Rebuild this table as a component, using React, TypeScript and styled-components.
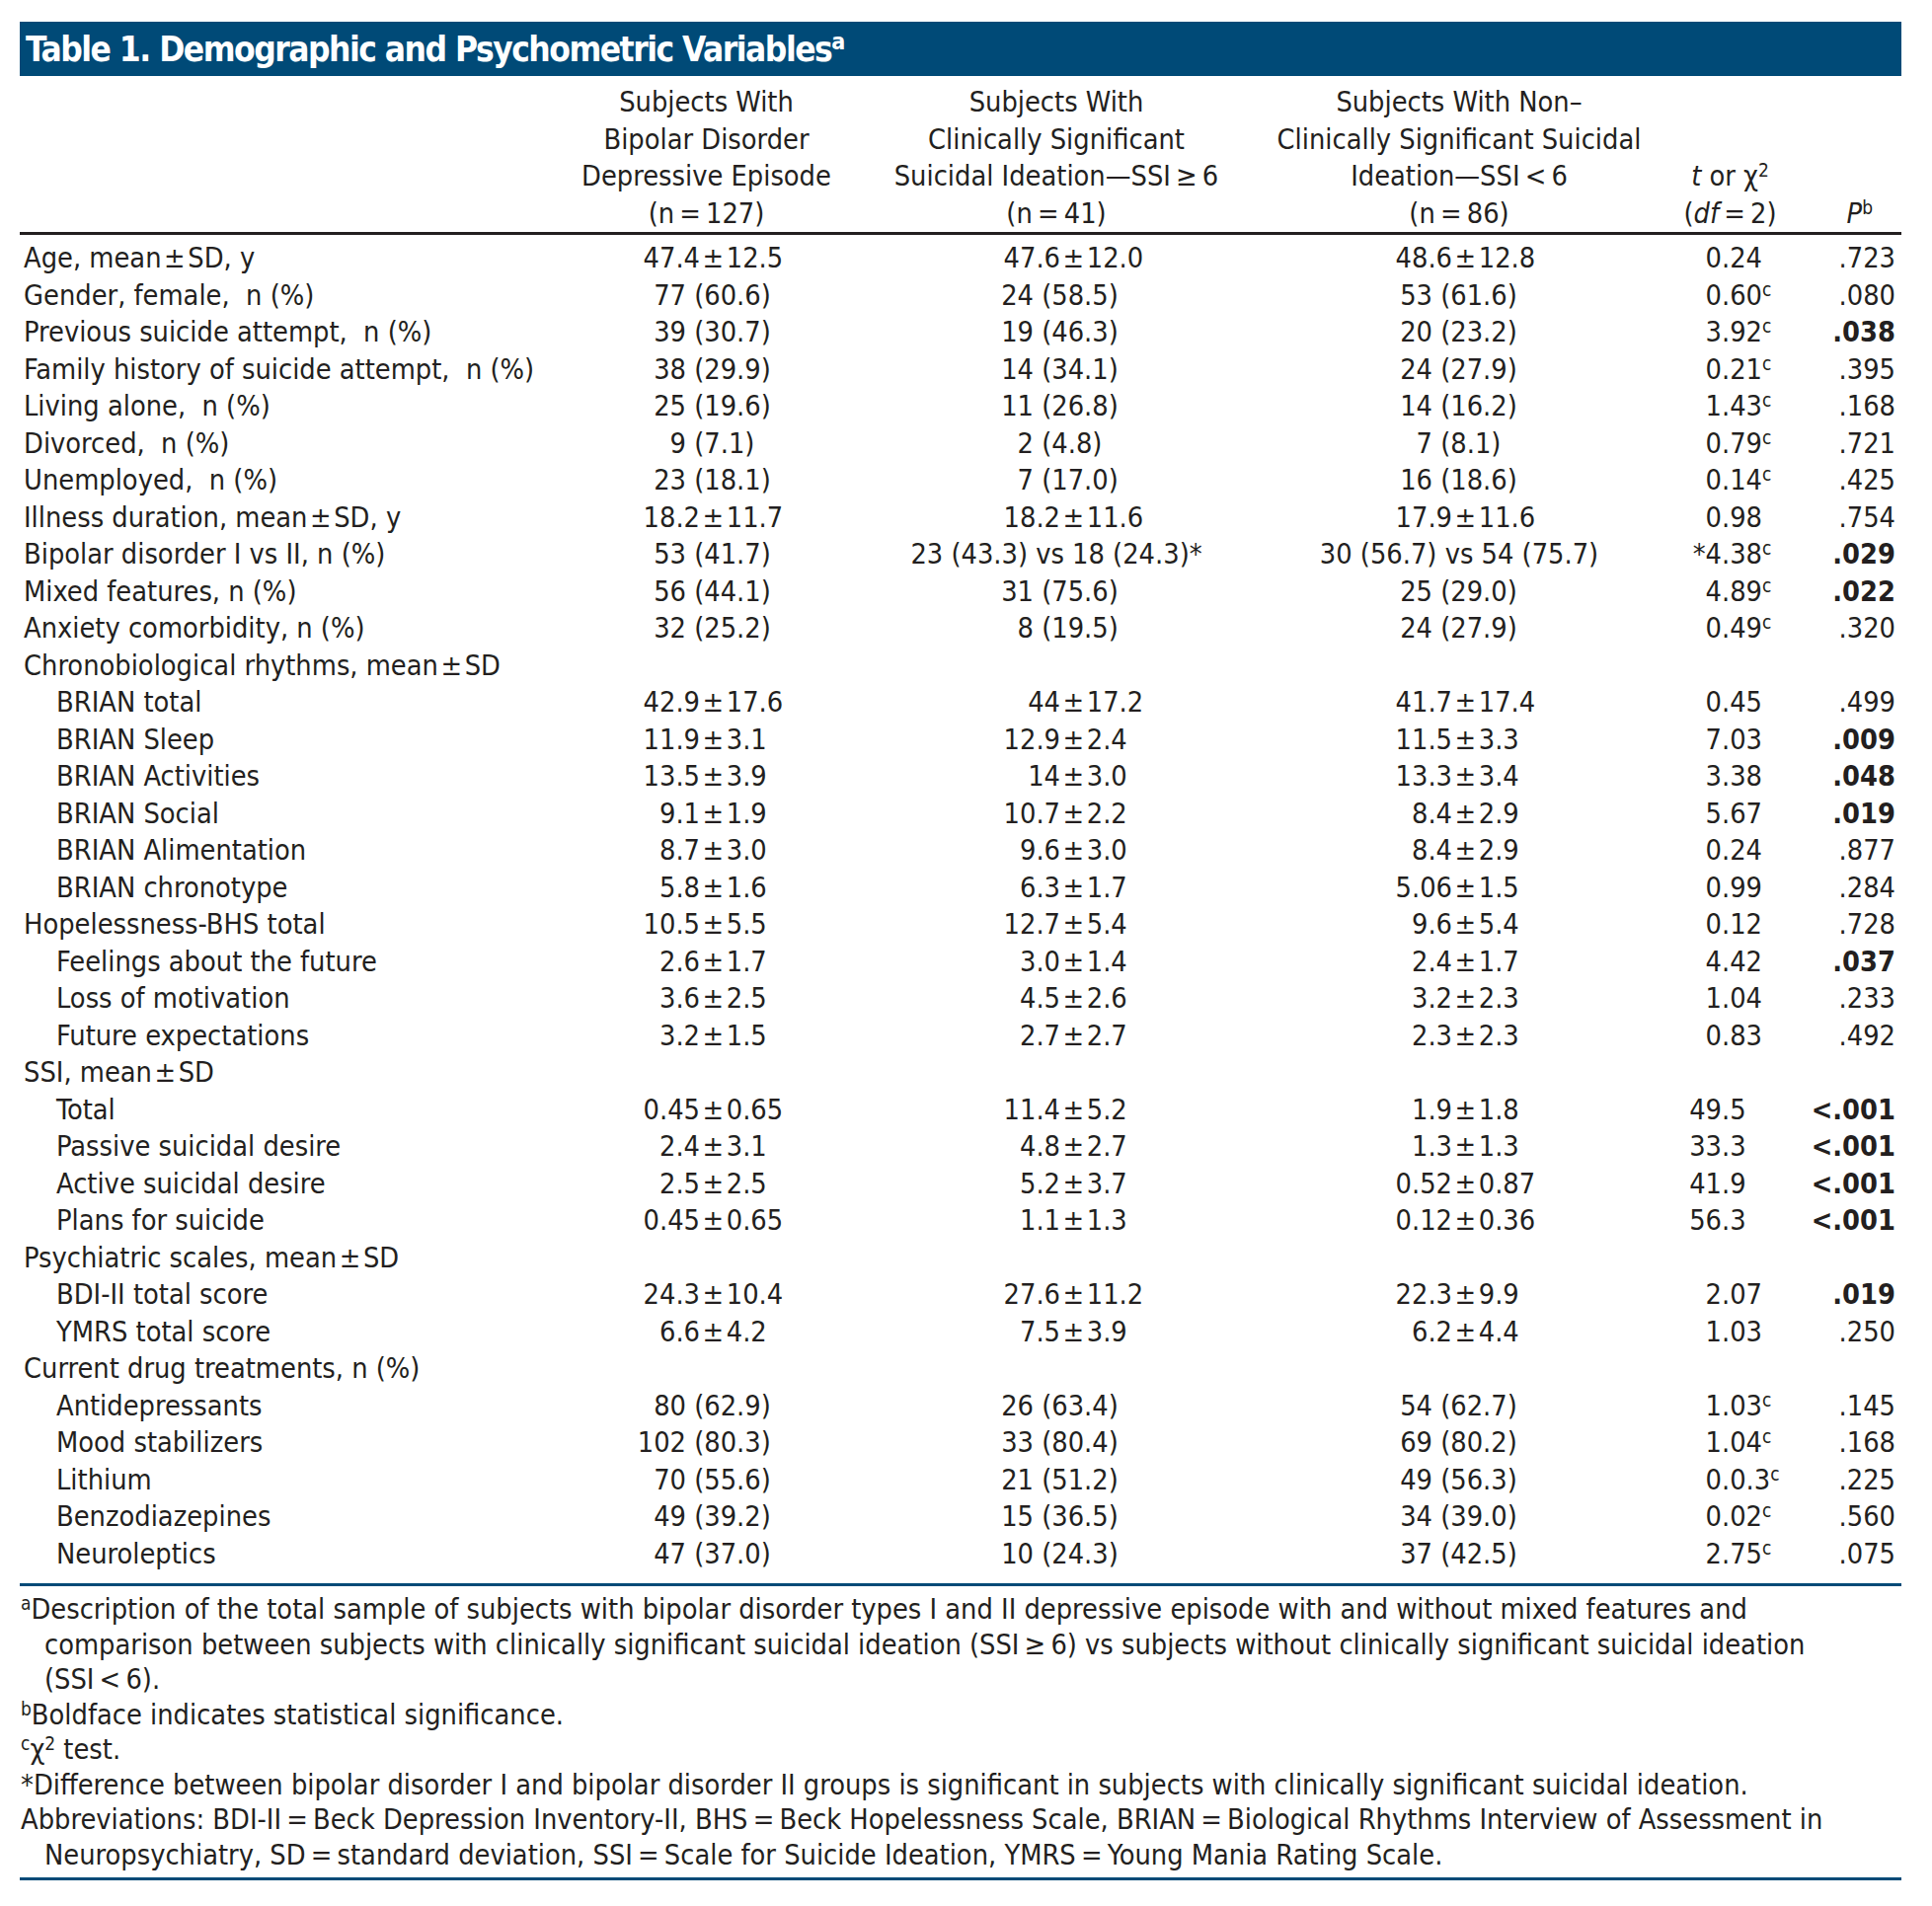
import React from 'react';
import styled, { createGlobalStyle } from 'styled-components';

const ink = '#231f20';
const navy = '#004a77';
const COLS = '527px 337px 372px 444px 105px 121px';
const PM = '\u200a±\u200a';
const EQ = '\u2009=\u2009';

type Row = {
    label: string;
    indent?: boolean;
    v?: [string, string, string];
    t?: string;
    p?: string;
    bold?: boolean;
};

const rows: Row[] = [
    { label: `Age, mean${PM}SD, y`, v: ['47.4±12.5', '47.6±12.0', '48.6±12.8'], t: '0.24', p: '.723' },
    { label: 'Gender, female,\u00a0 n (%)', v: ['77 (60.6)', '24 (58.5)', '53 (61.6)'], t: '0.60^c', p: '.080' },
    { label: 'Previous suicide attempt,\u00a0 n (%)', v: ['39 (30.7)', '19 (46.3)', '20 (23.2)'], t: '3.92^c', p: '.038', bold: true },
    { label: 'Family history of suicide attempt,\u00a0 n (%)', v: ['38 (29.9)', '14 (34.1)', '24 (27.9)'], t: '0.21^c', p: '.395' },
    { label: 'Living alone,\u00a0 n (%)', v: ['25 (19.6)', '11 (26.8)', '14 (16.2)'], t: '1.43^c', p: '.168' },
    { label: 'Divorced,\u00a0 n (%)', v: ['9 (7.1)', '2 (4.8)', '7 (8.1)'], t: '0.79^c', p: '.721' },
    { label: 'Unemployed,\u00a0 n (%)', v: ['23 (18.1)', '7 (17.0)', '16 (18.6)'], t: '0.14^c', p: '.425' },
    { label: `Illness duration, mean${PM}SD, y`, v: ['18.2±11.7', '18.2±11.6', '17.9±11.6'], t: '0.98', p: '.754' },
    { label: 'Bipolar disorder I vs II, n (%)', v: ['53 (41.7)', '23 (43.3) vs 18 (24.3)*', '30 (56.7) vs 54 (75.7)'], t: '*4.38^c', p: '.029', bold: true },
    { label: 'Mixed features, n (%)', v: ['56 (44.1)', '31 (75.6)', '25 (29.0)'], t: '4.89^c', p: '.022', bold: true },
    { label: 'Anxiety comorbidity, n (%)', v: ['32 (25.2)', '8 (19.5)', '24 (27.9)'], t: '0.49^c', p: '.320' },
    { label: `Chronobiological rhythms, mean${PM}SD` },
    { label: 'BRIAN total', indent: true, v: ['42.9±17.6', '44±17.2', '41.7±17.4'], t: '0.45', p: '.499' },
    { label: 'BRIAN Sleep', indent: true, v: ['11.9±3.1', '12.9±2.4', '11.5±3.3'], t: '7.03', p: '.009', bold: true },
    { label: 'BRIAN Activities', indent: true, v: ['13.5±3.9', '14±3.0', '13.3±3.4'], t: '3.38', p: '.048', bold: true },
    { label: 'BRIAN Social', indent: true, v: ['9.1±1.9', '10.7±2.2', '8.4±2.9'], t: '5.67', p: '.019', bold: true },
    { label: 'BRIAN Alimentation', indent: true, v: ['8.7±3.0', '9.6±3.0', '8.4±2.9'], t: '0.24', p: '.877' },
    { label: 'BRIAN chronotype', indent: true, v: ['5.8±1.6', '6.3±1.7', '5.06±1.5'], t: '0.99', p: '.284' },
    { label: 'Hopelessness-BHS total', v: ['10.5±5.5', '12.7±5.4', '9.6±5.4'], t: '0.12', p: '.728' },
    { label: 'Feelings about the future', indent: true, v: ['2.6±1.7', '3.0±1.4', '2.4±1.7'], t: '4.42', p: '.037', bold: true },
    { label: 'Loss of motivation', indent: true, v: ['3.6±2.5', '4.5±2.6', '3.2±2.3'], t: '1.04', p: '.233' },
    { label: 'Future expectations', indent: true, v: ['3.2±1.5', '2.7±2.7', '2.3±2.3'], t: '0.83', p: '.492' },
    { label: `SSI, mean${PM}SD` },
    { label: 'Total', indent: true, v: ['0.45±0.65', '11.4±5.2', '1.9±1.8'], t: '49.5', p: '<.001', bold: true },
    { label: 'Passive suicidal desire', indent: true, v: ['2.4±3.1', '4.8±2.7', '1.3±1.3'], t: '33.3', p: '<.001', bold: true },
    { label: 'Active suicidal desire', indent: true, v: ['2.5±2.5', '5.2±3.7', '0.52±0.87'], t: '41.9', p: '<.001', bold: true },
    { label: 'Plans for suicide', indent: true, v: ['0.45±0.65', '1.1±1.3', '0.12±0.36'], t: '56.3', p: '<.001', bold: true },
    { label: `Psychiatric scales, mean${PM}SD` },
    { label: 'BDI-II total score', indent: true, v: ['24.3±10.4', '27.6±11.2', '22.3±9.9'], t: '2.07', p: '.019', bold: true },
    { label: 'YMRS total score', indent: true, v: ['6.6±4.2', '7.5±3.9', '6.2±4.4'], t: '1.03', p: '.250' },
    { label: 'Current drug treatments, n (%)' },
    { label: 'Antidepressants', indent: true, v: ['80 (62.9)', '26 (63.4)', '54 (62.7)'], t: '1.03^c', p: '.145' },
    { label: 'Mood stabilizers', indent: true, v: ['102 (80.3)', '33 (80.4)', '69 (80.2)'], t: '1.04^c', p: '.168' },
    { label: 'Lithium', indent: true, v: ['70 (55.6)', '21 (51.2)', '49 (56.3)'], t: '0.0.3^c', p: '.225' },
    { label: 'Benzodiazepines', indent: true, v: ['49 (39.2)', '15 (36.5)', '34 (39.0)'], t: '0.02^c', p: '.560' },
    { label: 'Neuroleptics', indent: true, v: ['47 (37.0)', '10 (24.3)', '37 (42.5)'], t: '2.75^c', p: '.075' },
];

// where the separator (± or the opening paren) sits in each value column
const anchors = [
    { at: 162, paren: 14 },
    { at: 190, paren: 27 },
    { at: 215, paren: 20 },
];

const GlobalStyle = createGlobalStyle`
    html, body {
        margin: 0;
        padding: 0;
        background: #fff;
    }
    body {
        font-family: 'Liberation Sans Narrow', 'DejaVu Sans Condensed', 'Liberation Sans', sans-serif;
        color: ${ink};
    }
`;

const Page = styled.div`
    width: 1906px;
    padding: 22px 31px 0 20px;
`;

const TitleBar = styled.div`
    height: 55px;
    display: flex;
    align-items: center;
    padding-left: 6px;
    background: ${navy};
    color: #fff;
    font-size: 35px;
    font-weight: 700;
    letter-spacing: -1.5px;
    white-space: nowrap;
`;

const Head = styled.div`
    display: grid;
    grid-template-columns: ${COLS};
    align-items: end;
    padding-top: 8px;
    border-bottom: 3px solid ${ink};
    font-size: 28.7px;
    line-height: 37.5px;
`;

const HeadCell = styled.div<{ $right?: number }>`
    text-align: ${p => (p.$right !== undefined ? 'right' : 'center')};
    padding-right: ${p => p.$right ?? 0}px;
    white-space: nowrap;
`;

const Body = styled.div`
    padding: 5px 0 11px;
    border-bottom: 3px solid ${navy};
`;

const Line = styled.div`
    display: grid;
    grid-template-columns: ${COLS};
    align-items: center;
    height: 37.5px;
    font-size: 28.7px;
    line-height: 37.5px;
`;

const Label = styled.div<{ $indent?: boolean }>`
    padding-left: ${p => (p.$indent ? 37 : 4)}px;
    white-space: nowrap;
`;

const Anchored = styled.div<{ $at: number }>`
    display: grid;
    grid-template-columns: ${p => p.$at}px auto;
    white-space: pre;
`;

const Lead = styled.span`
    text-align: right;
`;

const Tail = styled.span`
    text-align: left;
`;

const Centered = styled.div`
    text-align: center;
    white-space: nowrap;
`;

const PValue = styled.div<{ $bold?: boolean }>`
    text-align: right;
    padding-right: 6px;
    font-weight: ${p => (p.$bold ? 700 : 400)};
`;

const Sup = styled.sup`
    font-size: 0.66em;
    line-height: 0;
    vertical-align: 0.5em;
    letter-spacing: 0;
`;

const Notes = styled.div`
    padding: 6px 0 5px 1px;
    border-bottom: 3px solid ${navy};
    font-size: 28.7px;
    line-height: 35.5px;
`;

const Note = styled.div`
    padding-left: 24px;
    text-indent: -24px;
    white-space: nowrap;
`;

function withSup(text: string) {
    const [main, sup] = text.split('^');
    return (
        <>
            {main}
            {sup && <Sup>{sup}</Sup>}
        </>
    );
}

function ValueCell({ value, col }: { value: string; col: number }) {
    if (value.includes(' vs ')) return <Centered>{value}</Centered>;
    const a = anchors[col];
    if (value.includes('±')) {
        const [lead, tail] = value.split('±');
        return (
            <Anchored $at={a.at}>
                <Lead>{lead}</Lead>
                <Tail>{PM + tail}</Tail>
            </Anchored>
        );
    }
    const i = value.indexOf(' (');
    return (
        <Anchored $at={a.at - a.paren}>
            <Lead>{value.slice(0, i)}</Lead>
            <Tail>{value.slice(i)}</Tail>
        </Anchored>
    );
}

function StatCell({ value }: { value: string }) {
    const i = value.indexOf('.');
    return (
        <Anchored $at={44}>
            <Lead>{value.slice(0, i)}</Lead>
            <Tail>{withSup(value.slice(i))}</Tail>
        </Anchored>
    );
}

export default function App() {
    return (
        <Page>
            <GlobalStyle />
            <TitleBar>
                <span>
                    Table 1. Demographic and Psychometric Variables<Sup>a</Sup>
                </span>
            </TitleBar>
            <Head>
                <HeadCell />
                <HeadCell>
                    Subjects With<br />Bipolar Disorder<br />Depressive Episode<br />(n{EQ}127)
                </HeadCell>
                <HeadCell>
                    Subjects With<br />Clinically Significant<br />Suicidal Ideation—SSI{'\u2009≥\u2009'}6<br />(n{EQ}41)
                </HeadCell>
                <HeadCell>
                    Subjects With Non–<br />Clinically Significant Suicidal<br />Ideation—SSI{'\u2009<\u2009'}6<br />(n{EQ}86)
                </HeadCell>
                <HeadCell>
                    <i>t</i> or χ<Sup>2</Sup>
                    <br />(<i>df</i>{EQ}2)
                </HeadCell>
                <HeadCell $right={29}>
                    <i>P</i>
                    <Sup>b</Sup>
                </HeadCell>
            </Head>
            <Body>
                {rows.map(r => (
                    <Line key={r.label}>
                        <Label $indent={r.indent}>{r.label}</Label>
                        {r.v ? r.v.map((v, i) => <ValueCell key={i} value={v} col={i} />) : <><div /><div /><div /></>}
                        {r.t ? <StatCell value={r.t} /> : <div />}
                        {r.p ? <PValue $bold={r.bold}>{r.p}</PValue> : <div />}
                    </Line>
                ))}
            </Body>
            <Notes>
                <Note>
                    <Sup>a</Sup>Description of the total sample of subjects with bipolar disorder types I and II depressive episode with and without mixed features and
                    <br />comparison between subjects with clinically significant suicidal ideation (SSI{'\u2009≥\u2009'}6) vs subjects without clinically significant suicidal ideation
                    <br />(SSI{'\u2009<\u2009'}6).
                </Note>
                <Note>
                    <Sup>b</Sup>Boldface indicates statistical significance.
                </Note>
                <Note>
                    <Sup>c</Sup>χ<Sup>2</Sup> test.
                </Note>
                <Note>*Difference between bipolar disorder I and bipolar disorder II groups is significant in subjects with clinically significant suicidal ideation.</Note>
                <Note>
                    Abbreviations: BDI-II{EQ}Beck Depression Inventory-II, BHS{EQ}Beck Hopelessness Scale, BRIAN{EQ}Biological Rhythms Interview of Assessment in
                    <br />Neuropsychiatry, SD{EQ}standard deviation, SSI{EQ}Scale for Suicide Ideation, YMRS{EQ}Young Mania Rating Scale.
                </Note>
            </Notes>
        </Page>
    );
}
